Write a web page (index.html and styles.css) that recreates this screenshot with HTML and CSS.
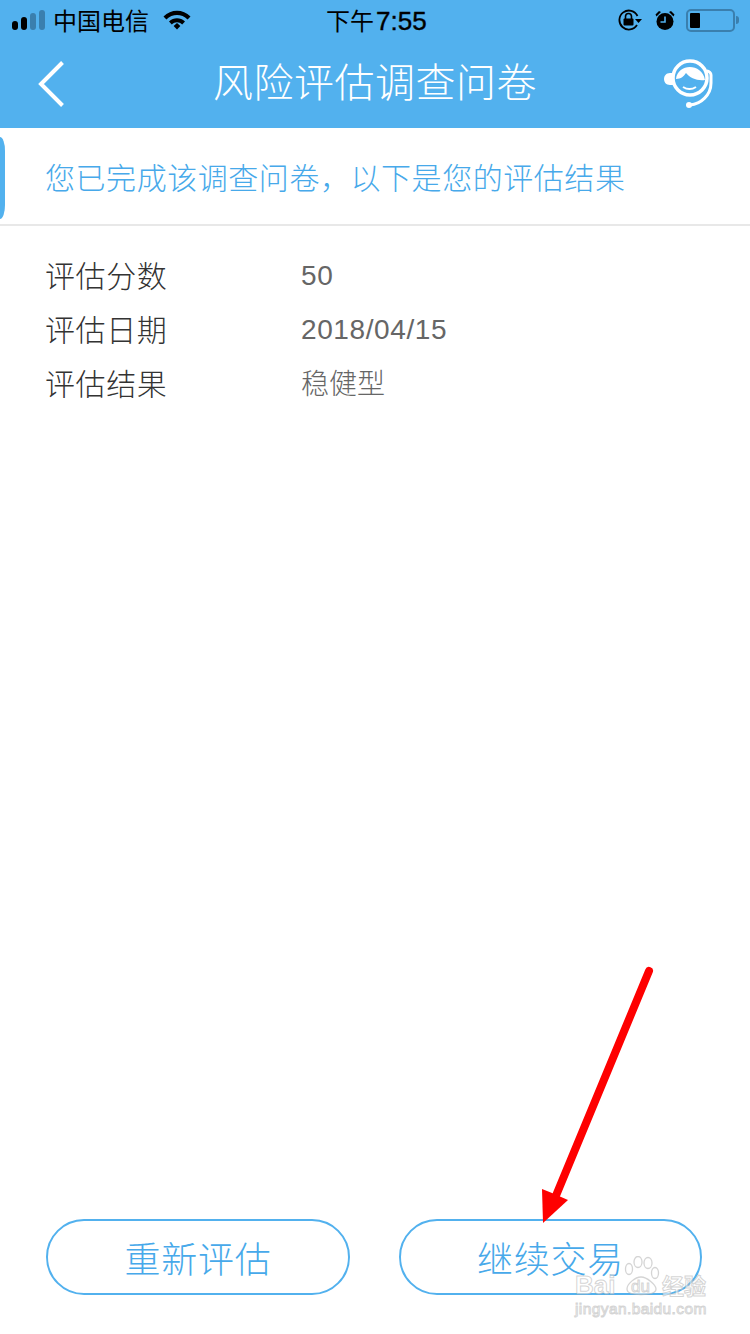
FILE: index.html
```html
<!DOCTYPE html>
<html lang="zh-CN">
<head>
  <meta charset="UTF-8" />
  <meta name="viewport" content="width=device-width, initial-scale=1.0"/>
  <title>风险评估调查问卷</title>
  <link rel="stylesheet" href="styles.css">
</head>
<body>
<div class="page">

  <header class="top">
    <div class="status">
      <div class="status-left">
        <div class="signal"><i></i><i></i><i class="off"></i><i class="off"></i></div>
        <span class="carrier">中国电信</span>
        <svg class="wifi" width="28" height="20" viewBox="0 0 28 20">
          <path d="M0.5 6.500C8 -1.200 20 -1.200 27.500 6.500L24.600 9.500C18.500 3.600 9.500 3.600 3.400 9.500Z"/>
          <path d="M6 11.500C10.600 7.200 17.400 7.200 22 11.500L19.200 14.400C16 11.600 12 11.600 8.800 14.400Z"/>
          <path d="M10.600 16L14 12.900L17.400 16L14 19.600Z"/>
        </svg>
      </div>
      <span class="time">下午<span class="time-num">7:55</span></span>
      <div class="status-right">
        <svg class="lock" width="24" height="22" viewBox="0 0 24 22">
          <path d="M19 16A9.500 9.500 0 1 1 19.500 7" fill="none" stroke="#000" stroke-width="1.800"/>
          <path d="M17 10h7l-3.500 4z"/>
          <rect x="5.500" y="9.500" width="10" height="7" rx="1"/>
          <path d="M7.500 10V7.500a3 3 0 0 1 6 0V10" fill="none" stroke="#000" stroke-width="1.600"/>
        </svg>
        <svg class="alarm" width="20" height="22" viewBox="0 0 20 22">
          <circle cx="10" cy="12.500" r="8.500"/>
          <path d="M0.500 5.500L4 2L6 3L1.500 7.500Z"/>
          <path d="M19.500 5.500L16 2L14 3L18.500 7.500Z"/>
          <path d="M10 7.500V13H5.500" fill="none" stroke="#52b1ee" stroke-width="1.600"/>
        </svg>
        <div class="battery"><div class="battery-body"><div class="battery-level"></div></div><div class="battery-tip"></div></div>
      </div>
    </div>
    <div class="nav">
      <svg class="back" width="30" height="50" viewBox="0 0 30 50">
        <path d="M26.500 3.500L5 25L26.500 46.500" fill="none" stroke="#fff" stroke-width="4"/>
      </svg>
      <h1>风险评估调查问卷</h1>
      <svg class="service" width="52" height="52" viewBox="0 0 52 52">
        <circle cx="27" cy="22" r="17" fill="none" stroke="#fff" stroke-width="3.500"/>
        <path d="M10 17H7C3 17 1 20 1 23C1 26 3 29 7 29H10Z" fill="#fff"/>
        <path d="M13 23C15 7 39 7 42 24C34 25 27 22 23 17C21 20 18 23 13 23Z" fill="#fff"/>
        <path d="M20 31C24 33.500 29 33.500 33 31" fill="none" stroke="#fff" stroke-width="2"/>
        <path d="M44 15C46 15 48 17 48 19V27C48 39 38 48 27 49" fill="none" stroke="#fff" stroke-width="3"/>
        <circle cx="26" cy="49" r="3" fill="#fff"/>
      </svg>
    </div>
  </header>

  <section class="notice">您已完成该调查问卷，以下是您的评估结果</section>

  <section class="result">
    <div class="row"><span class="label">评估分数</span><span class="value num">50</span></div>
    <div class="row"><span class="label">评估日期</span><span class="value num">2018/04/15</span></div>
    <div class="row"><span class="label">评估结果</span><span class="value">稳健型</span></div>
  </section>

  <div class="actions">
    <button class="btn" type="button">重新评估</button>
    <button class="btn" type="button">继续交易</button>
  </div>

  <!-- annotation + watermark sit on top of the screenshot -->
  <svg class="arrow" width="120" height="270" viewBox="0 0 120 270">
    <path d="M108 5L14 232" fill="none" stroke="#fe0000" stroke-width="8" stroke-linecap="round"/>
    <path d="M1 223L11 227L27 234L2 257Z" fill="#fe0000"/>
  </svg>
  <div class="watermark">
    <div class="wm-top">
      <span class="wm-en">Bai</span>
      <div class="wm-paw">
        <svg width="36" height="40" viewBox="0 0 36 40">
          <ellipse cx="5" cy="13" rx="3.500" ry="5.500"/>
          <ellipse cx="14" cy="6" rx="4" ry="5.500"/>
          <ellipse cx="24" cy="7" rx="4" ry="5.500"/>
          <ellipse cx="31" cy="17" rx="3.500" ry="5.500"/>
          <path d="M17 21C23 21 32 29 32 33C32 38 24 38.500 17 38.500C10 38.500 3 38 3 33C3 28 11 21 17 21Z"/>
        </svg>
        <span class="wm-du">du</span>
      </div>
      <span class="wm-cn">经验</span>
    </div>
    <div class="wm-url">jingyan.baidu.com</div>
  </div>

</div>
</body>
</html>
```

FILE: styles.css
```css
* { box-sizing: border-box; }
body {
  margin: 0;
  font-family: "Noto Sans CJK SC", "Liberation Sans", sans-serif;
  font-weight: 300;
  background: #fff;
  color: #333;
}

.page {
  position: relative;
  display: flex;
  flex-direction: column;
  width: 750px;
  height: 1334px;
  overflow: hidden;
}

.top { background: #52b1ee; height: 128px; }

.status {
  display: flex;
  align-items: center;
  justify-content: space-between;
  height: 40px;
  padding: 0 11px 0 12px;
  position: relative;
  color: #000;
}
.status-left, .status-right { display: flex; align-items: center; }
.signal { display: flex; align-items: flex-end; gap: 3px; width: 33px; height: 20px; }
.signal i { display: block; width: 6px; background: #000; border-radius: 3px; }
.signal i:nth-child(1) { height: 9px; }
.signal i:nth-child(2) { height: 13px; }
.signal i:nth-child(3) { height: 17px; }
.signal i:nth-child(4) { height: 20px; }
.signal i.off { background: #3a7fae; }
.carrier { font-size: 24px; line-height: 40px; margin-left: 8px; font-weight: 400; }
.wifi { margin-left: 14px; }
.time {
  position: absolute;
  left: 326px;
  font-size: 24px;
  line-height: 40px;
  font-weight: 400;
}
.time-num {
  font-family: "Liberation Sans", sans-serif;
  font-size: 26px;
  margin-left: 2px;
  -webkit-text-stroke: 0.4px #000;
}
.lock { margin-right: 13px; }
.alarm { margin-right: 11px; }
.battery { display: flex; align-items: center; }
.battery-body {
  width: 49px;
  height: 23px;
  border: 2px solid #3a7fae;
  border-radius: 5px;
  padding: 2px 2px;
}
.battery-level { width: 10px; height: 100%; background: #000; border-radius: 1px; }
.battery-tip { width: 3px; height: 8px; background: #3a7fae; border-radius: 0 3px 3px 0; margin-left: 1px; }

.nav {
  display: flex;
  align-items: center;
  justify-content: space-between;
  height: 88px;
  padding: 0 35px 4px 36px;
  position: relative;
}
.back { margin-top: 4px; }
.nav h1 {
  position: absolute;
  left: 0;
  right: 0;
  margin: -5px 0 0;
  text-align: center;
  font-size: 40px;
  font-weight: 300;
  letter-spacing: 0.500px;
  color: #fff;
}

.notice {
  position: relative;
  height: 98px;
  padding: 0 45px;
  display: flex;
  align-items: center;
  font-size: 30px;
  letter-spacing: 0.550px;
  color: #47a9ea;
  border-bottom: 2px solid #e8e8e8;
}
.notice::before {
  content: "";
  position: absolute;
  left: 0;
  top: 9px;
  width: 5px;
  height: 82px;
  background: #52b1ee;
  border-radius: 0 5px 5px 0 / 0 14px 14px 0;
}

.result { padding: 21px 45px 0; }
.row { display: flex; align-items: center; height: 54px; }
.label { width: 256px; font-size: 30px; letter-spacing: 0.600px; color: #333; }
.value {
  font-size: 28px;
  color: #666;
}
.value.num {
  font-family: "Liberation Sans", sans-serif;
  letter-spacing: 0.600px;
  margin-top: 4px;
}

.actions {
  display: flex;
  justify-content: space-between;
  margin-top: auto;
  padding: 0 48px 39px 46px;
}
.btn {
  width: 304px;
  height: 76px;
  padding: 0;
  background: #fff;
  border: 2px solid #52b1ee;
  border-radius: 38px;
  font-family: inherit;
  font-weight: 300;
  font-size: 36px;
  letter-spacing: 0.800px;
  color: #47a9ea;
}
.btn:last-child { width: 303px; }

.arrow { position: absolute; left: 541px; top: 966px; }

.watermark {
  position: absolute;
  left: 575px;
  top: 1256px;
  font-family: "Liberation Sans", sans-serif;
  color: rgba(255, 255, 255, 0.55);
  -webkit-text-stroke: 1px rgba(170, 170, 170, 0.5);
}
.wm-top { display: flex; align-items: flex-end; height: 40px; }
.wm-en { width: 49px; font-size: 26px; font-weight: 700; line-height: 22px; }
.wm-paw { position: relative; width: 38px; height: 40px; }
.wm-paw svg { display: block; fill: rgba(255, 255, 255, 0.55); stroke: rgba(170, 170, 170, 0.5); stroke-width: 1.300; }
.wm-du {
  position: absolute;
  left: 7px;
  bottom: 1px;
  font-size: 17px;
  line-height: 17px;
}
.wm-cn {
  font-family: "Noto Sans CJK SC", sans-serif;
  font-size: 22px;
  line-height: 24px;
  font-weight: 700;
}
.wm-url { font-size: 15.500px; line-height: 16px; margin-top: 5px; letter-spacing: 0.400px; }
```
